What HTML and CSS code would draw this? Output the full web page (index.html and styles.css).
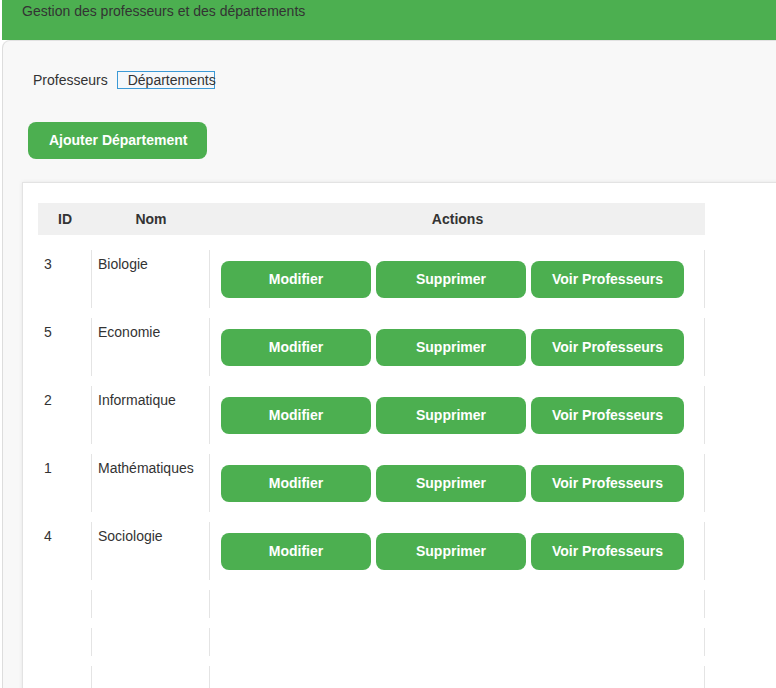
FILE: index.html
```html
<!DOCTYPE html>
<html lang="fr">
<head>
<meta charset="utf-8">
<title>Gestion des départements</title>
<link rel="stylesheet" href="styles.css">
</head>
<body>
<div class="app">
  <header class="topbar">Gestion des professeurs et des départements</header>
  <main class="panel">
    <nav class="tabs">
      <button class="tab">Professeurs</button>
      <button class="tab active">Départements</button>
    </nav>
    <button class="btn btn-add">Ajouter Département</button>
    <section class="card">
      <div class="grid">
        <div class="row head">
          <div class="th">ID</div>
          <div class="th">Nom</div>
          <div class="th">Actions</div>
        </div>
        <div class="row body">
          <div class="td">3</div>
          <div class="td">Biologie</div>
          <div class="td actions"><button class="btn">Modifier</button><button class="btn">Supprimer</button><button class="btn">Voir Professeurs</button></div>
        </div>
        <div class="row body">
          <div class="td">5</div>
          <div class="td">Economie</div>
          <div class="td actions"><button class="btn">Modifier</button><button class="btn">Supprimer</button><button class="btn">Voir Professeurs</button></div>
        </div>
        <div class="row body">
          <div class="td">2</div>
          <div class="td">Informatique</div>
          <div class="td actions"><button class="btn">Modifier</button><button class="btn">Supprimer</button><button class="btn">Voir Professeurs</button></div>
        </div>
        <div class="row body">
          <div class="td">1</div>
          <div class="td">Mathématiques</div>
          <div class="td actions"><button class="btn">Modifier</button><button class="btn">Supprimer</button><button class="btn">Voir Professeurs</button></div>
        </div>
        <div class="row body">
          <div class="td">4</div>
          <div class="td">Sociologie</div>
          <div class="td actions"><button class="btn">Modifier</button><button class="btn">Supprimer</button><button class="btn">Voir Professeurs</button></div>
        </div>
        <div class="row empty">
          <div class="td">&nbsp;</div><div class="td">&nbsp;</div><div class="td">&nbsp;</div>
        </div>
        <div class="row empty">
          <div class="td">&nbsp;</div><div class="td">&nbsp;</div><div class="td">&nbsp;</div>
        </div>
        <div class="row empty">
          <div class="td">&nbsp;</div><div class="td">&nbsp;</div><div class="td">&nbsp;</div>
        </div>
      </div>
    </section>
  </main>
</div>
</body>
</html>
```

FILE: styles.css
```css
* { box-sizing: border-box; }

html, body {
  margin: 0;
  padding: 0;
  background: #ffffff;
  overflow: hidden;
  width: 776px;
  height: 688px;
}

body {
  font-family: "Liberation Sans", Arial, sans-serif;
  font-size: 14px;
  color: #333333;
}

.app {
  margin-left: 2px;
  width: 774px;
  height: 688px;
  overflow: hidden;
}

.topbar {
  height: 40px;
  background: #4caf50;
  color: #333333;
  padding: 3px 20px 0;
  line-height: 16px;
}

.panel {
  width: 820px;
  background: #f8f8f8;
  border-top: 1px solid #e2e2e2;
  border-left: 1px solid #dddddd;
  border-top-left-radius: 8px;
  padding: 30px 0 0 19px;
  min-height: 700px;
}

.tabs {
  display: flex;
  gap: 8px;
  margin-left: 10px;
  height: 18px;
}

.tab {
  font: inherit;
  font-size: 14px;
  line-height: 16px;
  color: #333333;
  background: transparent;
  border: 1px solid transparent;
  padding: 0;
  margin: 0;
}

.tab.active {
  border-color: #3c9ad6;
  background: #f5f8fb;
  padding: 0 0 0 10px;
  width: 98px;
  text-align: left;
  white-space: nowrap;
}

.btn {
  font-family: "Liberation Sans", Arial, sans-serif;
  font-size: 14px;
  font-weight: bold;
  line-height: 17px;
  color: #ffffff;
  background: #4caf50;
  border: none;
  border-radius: 8px;
  padding: 10px 21px;
  min-width: 150px;
  text-align: center;
  white-space: nowrap;
}

.btn-add {
  display: block;
  min-width: 0;
  padding: 10px 20px 10px 21px;
  margin: 33px 0 0 6px;
}

.card {
  margin-top: 23px;
  background: #ffffff;
  border: 1px solid #e3e3e3;
  box-shadow: 0 0 4px rgba(0, 0, 0, 0.08);
  padding: 20px 0 0 15px;
  min-height: 600px;
}

.grid {
  display: flex;
  flex-direction: column;
  gap: 10px;
  width: 667px;
}

.row {
  display: grid;
  grid-template-columns: 54px 118px 495px;
}

.row.head {
  background: #f0f0f0;
  height: 32px;
  margin-bottom: 5px;
}

.th {
  font-weight: bold;
  text-align: center;
  line-height: 16px;
  padding-top: 8px;
  color: #333333;
}

.td {
  line-height: 16px;
  padding: 6px 6px 6px;
  border-right: 1px solid #e4e4e4;
}

.row.body {
  height: 58px;
}

.row.empty .td {
  padding: 6px;
  height: 28px;
}

.actions {
  display: flex;
  align-items: flex-start;
  gap: 5px;
  padding: 11px 0 0 11px;
}
```
